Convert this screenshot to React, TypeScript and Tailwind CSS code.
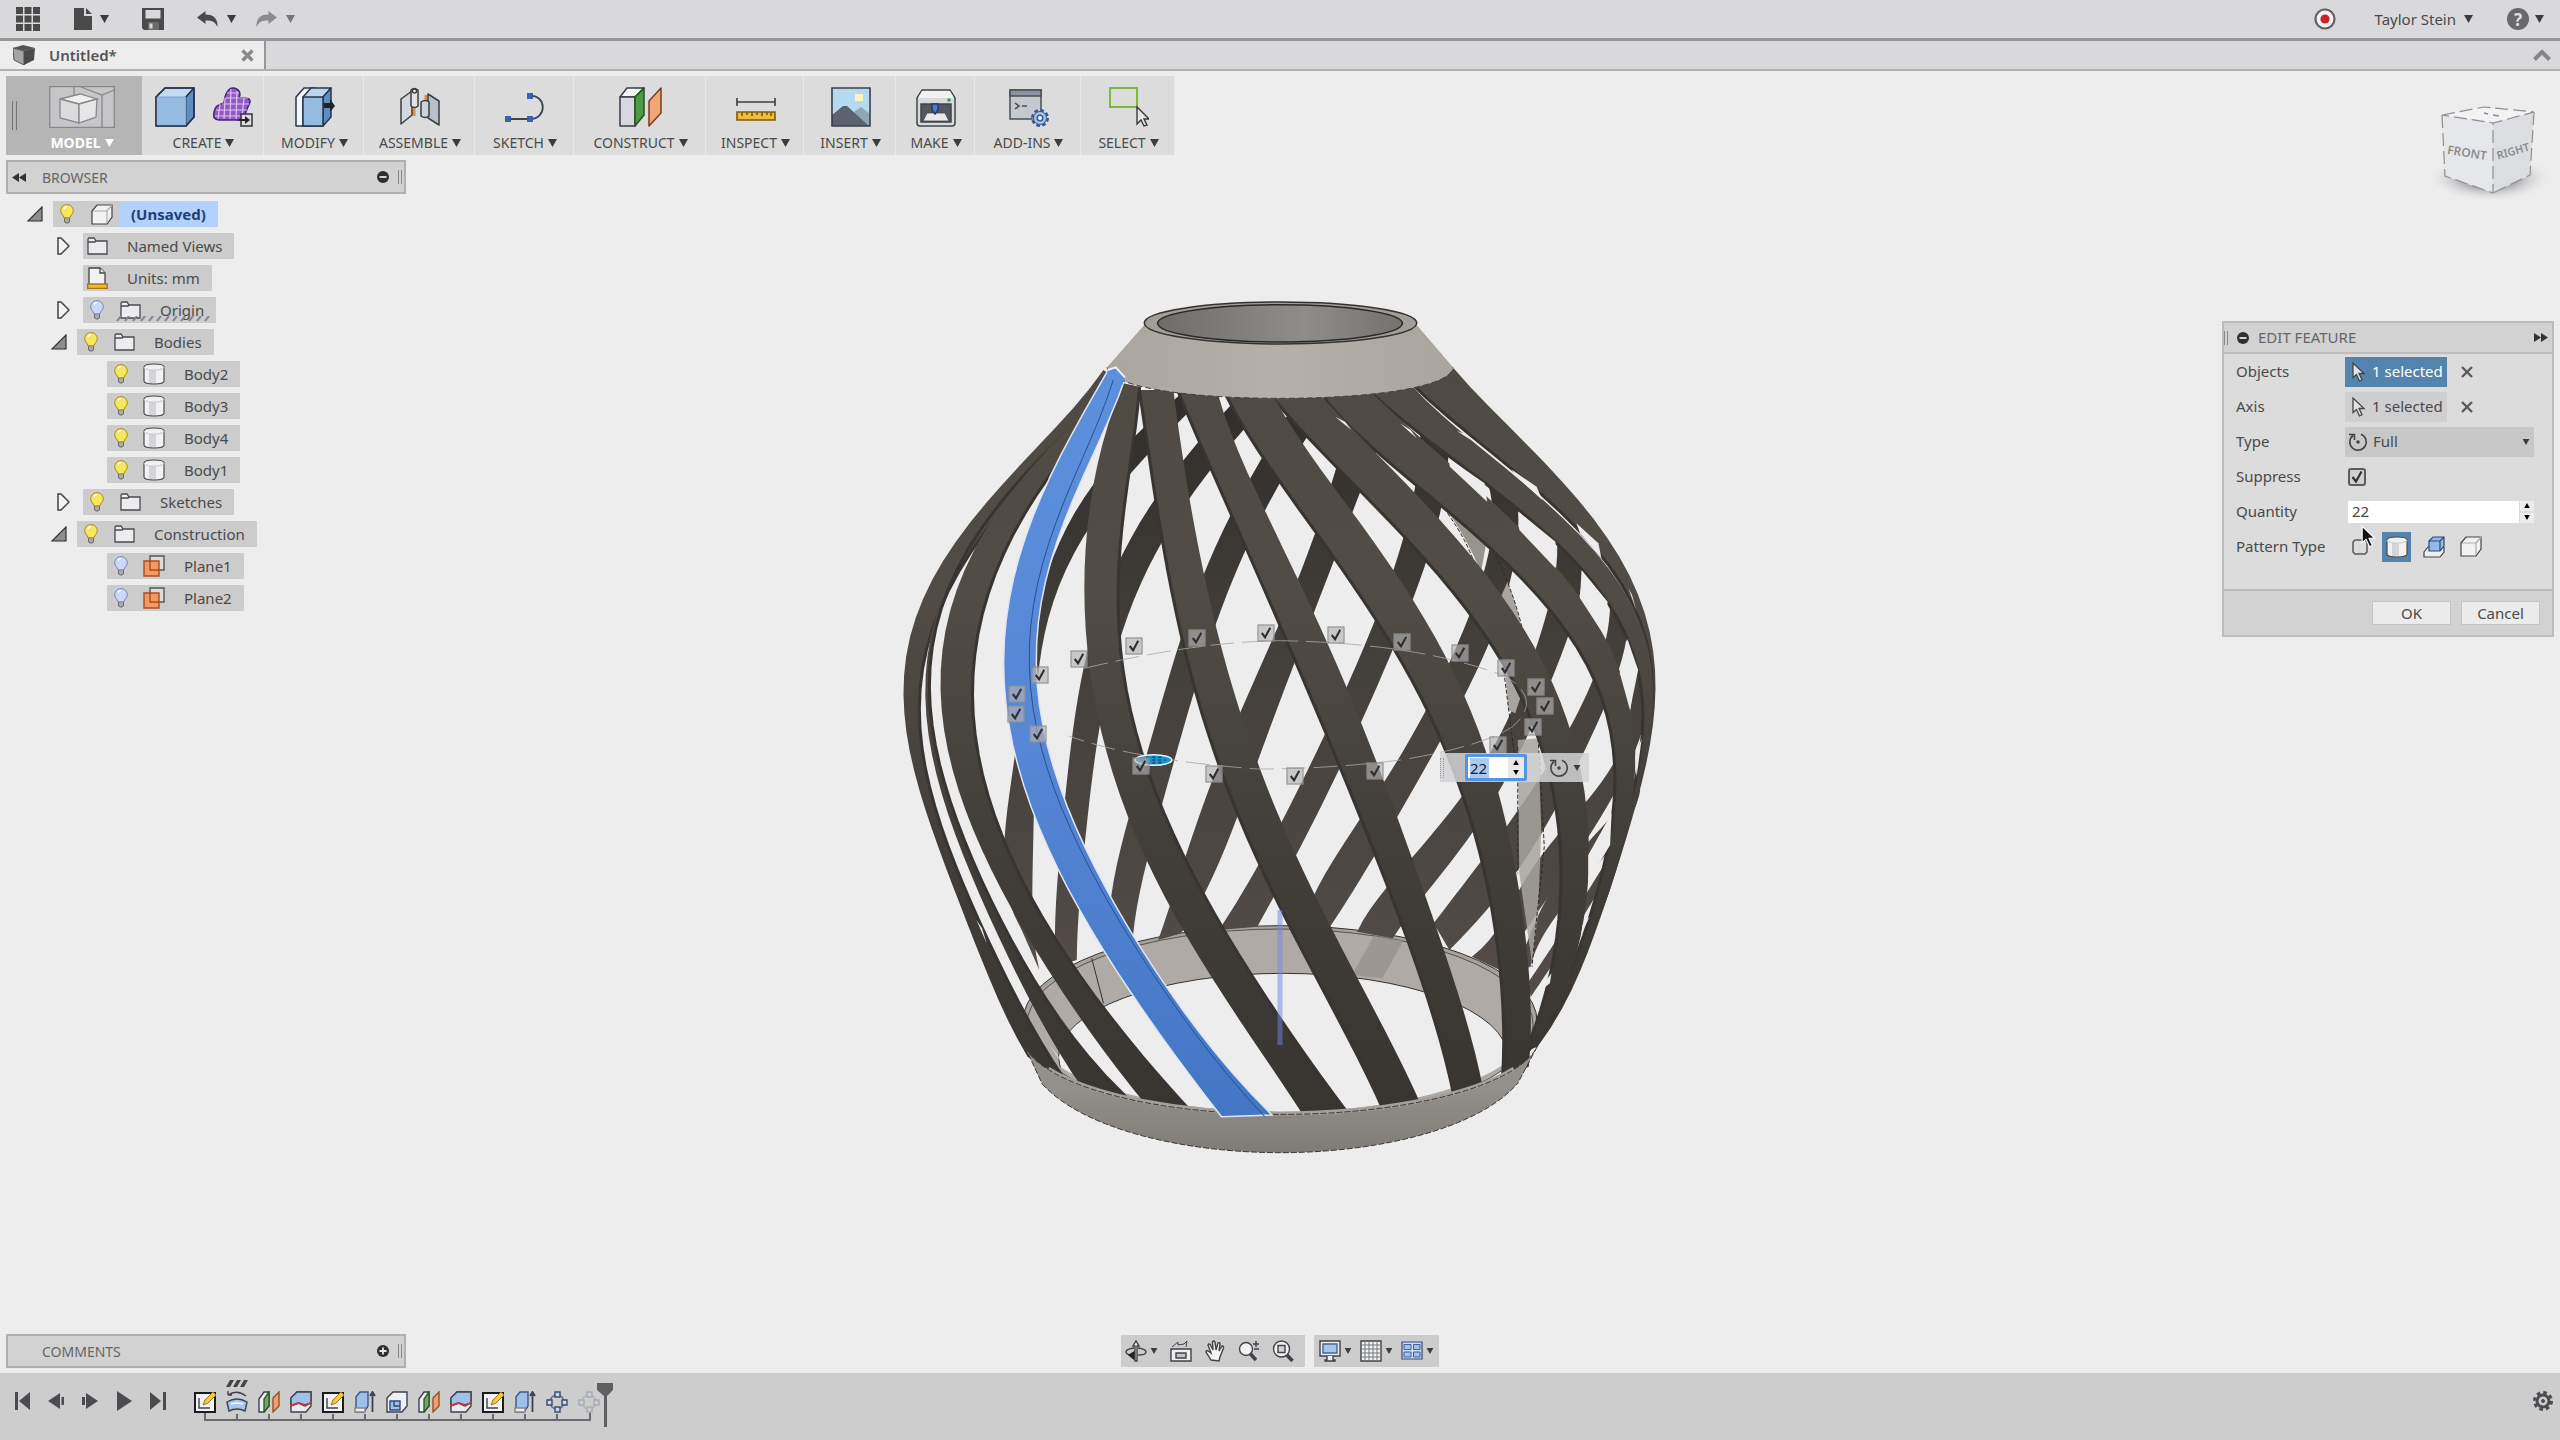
import { useState } from "react"
import type { ReactNode } from "react"
import { twMerge } from "tailwind-merge"

type Point = [number, number]

const parse = (s: string): Point[] => s.split(" ").map((p) => p.split(",").map(Number) as Point)

// Least squares fit of x as a polynomial of y, sampled evenly from top to bottom
function smooth(s: string, samples = 36): Point[] {
  const pts = parse(s)
  const top = pts[0][1]
  const bottom = pts[pts.length - 1][1]
  const n = Math.min(6, pts.length - 1)
  const norm = (y: number) => (2 * (y - top)) / (bottom - top) - 1

  const m = Array.from({ length: n }, () => new Array(n + 1).fill(0))
  for (const [x, y] of pts) {
    const t = norm(y)
    for (let i = 0; i < n; i++) {
      for (let j = 0; j < n; j++) m[i][j] += t ** (i + j)
      m[i][n] += x * t ** i
    }
  }
  for (let i = 0; i < n; i++) {
    for (let r = 0; r < n; r++) {
      if (r === i) continue
      const f = m[r][i] / m[i][i]
      for (let c = i; c <= n; c++) m[r][c] -= f * m[i][c]
    }
  }
  const coef = m.map((row, i) => row[n] / row[i])

  return Array.from({ length: samples + 1 }, (_, k) => {
    const y = top + ((bottom - top) * k) / samples
    const t = norm(y)
    return [coef.reduce((sum, c, i) => sum + c * t ** i, 0), y] as Point
  })
}

const join = (pts: Point[]) => pts.map(([x, y]) => `${x.toFixed(1)},${y.toFixed(1)}`).join("L")
const line = (s: string) => `M${join(smooth(s))}`
const band = (left: string, right: string) => `M${join(smooth(left))}L${join(smooth(right).reverse())}Z`

// Left and right edge of every rib, back of the vase first
const backRibs = [
  ["590,340 520,430 495,490 440,590 380,680 350,760 330,860 315,980 300,1130 285,1250 265,1350 250,1500 247,1700 255,1850 275,1950", "640,340 600,400 560,470 520,550 490,590 430,670 390,780 355,900 330,1020 322,1120 310,1250 297,1500 297,1660 305,1900 310,2070"],
  ["700,350 640,470 600,530 540,650 510,710 475,830 440,950 415,1080 398,1180 385,1300 370,1380 362,1560 352,1770 342,1940 345,2060", "770,350 715,450 650,570 600,650 560,780 520,890 490,980 460,1120 435,1320 400,1690 390,1920 385,2040"],
  ["820,350 755,520 725,595 685,710 635,880 600,1030 575,1150 542,1320 520,1430 487,1620 465,1750 452,1860 450,1980", "880,360 835,480 785,610 750,700 715,810 690,900 660,1020 630,1200 600,1320 575,1420 552,1570 525,1750 495,1970"],
  ["930,380 895,570 875,650 855,750 820,890 785,1030 745,1150 705,1320 655,1470 600,1730 545,1980", "1000,420 975,510 940,640 895,820 870,920 850,1000 810,1160 770,1320 700,1610 640,1830 590,1960"],
  ["1060,450 1050,600 1040,670 1030,770 1005,880 965,1040 912,1220 870,1370 800,1600 740,1750 665,1950", "1115,500 1105,640 1090,730 1070,860 1045,970 1000,1120 960,1250 905,1470 815,1720 740,1940"],
  ["1190,600 1195,760 1190,880 1155,990 1115,1150 1060,1320 970,1550 850,1845 830,1930", "1250,650 1250,770 1240,860 1225,970 1190,1100 1160,1200 1100,1380 1010,1620 880,1945"],
  ["1325,760 1325,880 1310,980 1285,1100 1250,1250 1200,1420 1140,1540 1040,1740 935,1955", "1370,800 1375,900 1365,1000 1345,1080 1320,1180 1290,1300 1210,1540 1165,1650 1070,1840 1005,1975"],
  ["1430,940 1425,1060 1400,1190 1360,1320 1260,1570 1170,1760 1085,1930", "1460,960 1455,1130 1440,1220 1400,1330 1330,1590 1250,1750 1200,1880 1115,2010"],
  ["1485,1170 1475,1250 1430,1460 1385,1580 1330,1650 1250,1840 1160,2030", "1510,1150 1505,1300 1450,1500 1400,1650 1300,1870 1215,2070"],
  ["1480,1520 1440,1600 1385,1690 1330,1800 1275,1960 1240,2080", "1490,1530 1440,1690 1380,1800 1335,1890 1275,2060"],
  ["1440,1700 1380,1860 1335,1950 1270,2110", "1430,1780 1380,1900 1330,2030 1275,2150"],
]

const rightRibs = [
  ["1040,300 1150,470 1240,575 1300,650 1370,735 1410,800 1440,880 1470,950 1490,1040 1500,1150 1503,1320 1500,1450 1475,1560 1440,1760 1400,1900 1340,2130 1275,2310", "1125,265 1200,390 1300,550 1380,670 1430,790 1480,920 1510,1060 1520,1200 1515,1320 1505,1420 1490,1520 1470,1640 1440,1800 1400,1960 1370,2080 1330,2200 1290,2300"],
  ["955,325 1080,490 1180,600 1260,700 1325,790 1380,880 1430,960 1460,1050 1480,1170 1490,1320 1492,1420 1480,1530 1440,1740 1395,1920 1340,2110", "1040,310 1130,450 1240,578 1300,665 1370,755 1420,850 1460,930 1480,1000 1500,1100 1510,1320 1505,1420 1490,1520 1455,1700 1410,1900 1345,2130"],
  ["865,340 960,500 1040,600 1110,700 1180,770 1230,850 1290,950 1330,1020 1365,1100 1395,1190 1415,1260 1425,1320 1438,1450 1440,1590 1430,1720 1400,1850 1375,1970 1355,2070 1325,2170", "960,325 1030,450 1110,540 1190,640 1250,740 1305,820 1350,910 1395,1000 1420,1080 1450,1190 1475,1320 1480,1450 1470,1640 1445,1770 1420,1880 1390,1970 1330,2190"],
  ["765,340 820,450 895,560 950,640 1020,760 1070,850 1130,950 1165,1010 1200,1080 1235,1200 1275,1320 1300,1450 1325,1580 1335,1720 1337,1870 1325,2020 1300,2150 1280,2220 1275,2300", "865,340 930,470 975,530 1035,610 1090,700 1140,780 1190,890 1225,970 1260,1050 1290,1120 1320,1220 1345,1320 1375,1470 1388,1600 1388,1720 1385,1880 1370,2000 1345,2110 1315,2210 1290,2295"],
  ["675,340 720,460 780,580 820,690 860,780 915,900 975,1015 1010,1100 1050,1220 1080,1320 1100,1380 1140,1540 1170,1700 1200,1880 1215,2040 1220,2190 1220,2400", "770,345 830,490 890,630 930,710 980,810 1025,900 1060,1000 1100,1110 1130,1200 1165,1320 1195,1450 1220,1590 1245,1750 1262,1920 1272,2120 1272,2360"],
  ["580,330 620,450 650,560 690,710 730,870 770,1000 810,1120 840,1220 865,1320 905,1470 945,1630 1000,1850 1040,2020 1080,2170 1100,2280 1125,2460", "660,340 700,490 725,590 755,700 790,820 830,930 860,1030 895,1150 915,1220 942,1320 970,1430 1010,1610 1040,1720 1070,1850 1095,1970 1125,2100 1150,2220 1182,2430"],
  ["508,330 525,500 540,650 560,830 590,1080 615,1240 637,1320 665,1440 705,1610 745,1750 790,1910 845,2070 880,2170 940,2320 990,2510", "575,330 590,500 607,650 630,850 655,1020 680,1170 712,1320 730,1400 770,1570 815,1720 850,1840 905,2000 950,2150 1000,2270 1064,2490"],
]

const leftRibs = [
  ["440,270 400,345 340,440 250,600 200,690 150,790 100,900 70,1000 55,1080 47,1200 50,1320 56,1400 75,1500 100,1640 150,1860 180,1960 220,2110 255,2240 290,2330", "450,290 420,380 350,500 270,620 220,720 150,880 110,1020 80,1200 80,1320 90,1460 120,1620 160,1810 200,1970 240,2090 275,2160 330,2290 355,2400"],
  ["440,290 390,380 310,520 250,630 205,710 165,810 130,910 105,1020 92,1200 95,1320 110,1480 160,1700 195,1850 235,2000 280,2130 330,2240 360,2330 400,2440", "440,340 385,440 320,545 250,640 205,720 165,810 130,910 112,1020 106,1200 110,1320 124,1500 167,1700 195,1790 220,1880 262,2010 313,2120 366,2240 392,2290 438,2380 477,2450"],
  ["440,330 390,430 330,520 250,640 200,760 160,860 135,1000 125,1120 130,1320 145,1450 170,1620 209,1750 250,1870 290,1970 320,2050 392,2220 438,2300 477,2380 525,2490", "470,340 420,430 350,530 325,600 300,690 250,800 215,900 196,1000 190,1120 190,1320 195,1470 215,1600 250,1700 290,1820 335,1940 365,2040 400,2110 440,2180 480,2280 530,2360 575,2420 615,2510"],
  ["475,310 460,380 430,540 415,650 402,850 398,1000 405,1140 425,1300 460,1450 487,1610 520,1740 565,1875 625,2040 680,2170 735,2280 775,2370 835,2525", "508,320 495,520 480,690 465,860 465,1000 475,1150 497,1320 515,1430 555,1580 600,1740 640,1870 725,2080 785,2220 850,2350 920,2510"],
]

const blueRib = [
  "445,275 415,350 375,480 330,600 290,740 260,900 245,1050 243,1200 250,1320 262,1400 290,1530 325,1690 365,1820 410,1950 440,2020 490,2130 550,2260 610,2390 668,2510",
  "480,290 465,370 430,480 395,600 365,700 340,830 318,950 308,1070 307,1200 318,1330 345,1490 380,1620 405,1710 440,1820 490,1950 540,2080 600,2200 660,2320 720,2430 768,2505",
]
const blueCrease = "458,300 440,380 405,490 360,680 320,850 297,1000 293,1180 305,1320 330,1480 370,1640 430,1820 500,1990 560,2140 640,2310 755,2510"

// Daylight between the tightly packed outer ribs
const gaps = [
  "892,410 912,426 924,450",
  "1019,430 1040,450 1052,475",
  "1130,452 1146,462 1158,480",
  "1114,535 1185,610 1190,665 1117,560",
  "1237,568 1287,620 1298,660 1248,590",
  "1251,695 1324,785 1324,865 1253,750",
  "1365,730 1408,790 1414,835 1372,760",
  "1375,870 1426,965 1421,1070 1372,955",
  "1467,925 1474,945 1482,990",
  "1465,1077 1486,1170 1470,1290 1450,1180",
  "1493,1375 1483,1490 1480,1430",
  "1434,1600 1431,1695 1388,1805 1388,1725",
  "1391,1910 1375,1960 1377,1935",
  "1316,2080 1313,2110 1284,2145",
  "350,540 345,570 330,595",
  "189,1920 200,1945 209,1990",
  "330,2290 352,2335 377,2395",
]

const instanceTicks = [
  [390, 1137], [497, 1098], [621, 1073], [757, 1058], [894, 1066], [1023, 1087], [1137, 1120], [1227, 1165],
  [1285, 1220], [1303, 1279], [314, 1186], [269, 1241], [267, 1303], [309, 1362], [511, 1458], [655, 1483],
  [814, 1487], [970, 1473], [1212, 1395], [1280, 1342],
]

function Caret({ className }: { className?: string }) {
  return (
    <svg className={twMerge("h-2 w-[9px] shrink-0 text-[#3c3c3c]", className)} viewBox="0 0 9 8" fill="currentColor" aria-hidden>
      <path d="M0 0h9L4.500 8z" />
    </svg>
  )
}

function Tick() {
  return (
    <svg className="pointer-events-none absolute inset-0 h-full w-full" viewBox="0 0 18 18" fill="none" stroke="#303030" strokeWidth="2.200" aria-hidden>
      <path d="M4.500 9l3.500 4.500L13.500 3.500" />
    </svg>
  )
}

function Vase() {
  return (
    <svg className="h-full w-full" viewBox="0 0 1568 2670" preserveAspectRatio="none" role="img" aria-label="Vase model">
      <defs>
        <linearGradient id="front" x1="0" y1="270" x2="0" y2="2500" gradientUnits="userSpaceOnUse">
          <stop offset="0" stopColor="#504a44" />
          <stop offset="0.3" stopColor="#514c45" />
          <stop offset="0.6" stopColor="#433f3b" />
          <stop offset="1" stopColor="#383430" />
        </linearGradient>
        <linearGradient id="back" x1="0" y1="340" x2="0" y2="2050" gradientUnits="userSpaceOnUse">
          <stop offset="0" stopColor="#302d2a" />
          <stop offset="0.45" stopColor="#433f3b" />
          <stop offset="1" stopColor="#524b47" />
        </linearGradient>
        <linearGradient id="blue" x1="0" y1="270" x2="0" y2="2500" gradientUnits="userSpaceOnUse">
          <stop offset="0" stopColor="#5c8fdc" />
          <stop offset="0.5" stopColor="#5587d6" />
          <stop offset="1" stopColor="#4376c4" />
        </linearGradient>
        <linearGradient id="mouth" x1="0" x2="1">
          <stop offset="0" stopColor="#6f6d6b" />
          <stop offset="0.6" stopColor="#8f8d8b" />
          <stop offset="1" stopColor="#747270" />
        </linearGradient>
        <linearGradient id="neck" x1="0" x2="1">
          <stop offset="0" stopColor="#aaa59e" />
          <stop offset="0.5" stopColor="#b5b0a9" />
          <stop offset="1" stopColor="#a9a49e" />
        </linearGradient>
        <linearGradient id="wall" x1="0" x2="0" y1="0" y2="1">
          <stop offset="0.4" stopColor="#93908b" />
          <stop offset="1" stopColor="#7f7c77" />
        </linearGradient>
        <clipPath id="rim">
          <ellipse cx="784" cy="2222" rx="500" ry="274" />
        </clipPath>
      </defs>

      {/* base ring, seen from the inside */}
      <ellipse cx="784" cy="2224" rx="504" ry="287" fill="#a5a19c" stroke="#35322f" vectorEffect="non-scaling-stroke" />
      <ellipse cx="784" cy="2234" rx="496" ry="287" fill="#b0aaa6" stroke="#55514d" vectorEffect="non-scaling-stroke" />
      <g clipPath="url(#rim)">
        <path d="M975 1950L925 2085L985 2095L1030 1970Z" fill="#968f89" opacity="0.7" />
        <ellipse cx="790" cy="2330" rx="440" ry="250" fill="#ededee" stroke="#35322f" vectorEffect="non-scaling-stroke" />
      </g>
      <path d="M415 2035L438 2170" fill="none" stroke="#35322f" vectorEffect="non-scaling-stroke" />

      {backRibs.map(([l, r]) => (
        <path key={l} d={band(l, r)} fill="url(#back)" />
      ))}

      {/* sliver of the profile surface */}
      <g fill="#a8a49f">
        <path d="M1090 650L1190 775L1178 875Q1140 740 1090 650Z" fill="#97948e" />
        <path d="M1230 905L1246 975L1258 1045L1217 950Z" />
        <path d="M1225 1170L1258 1240L1245 1300L1232 1290Z" />
        <path d="M1250 1380L1290 1375L1296 1650L1290 1900L1278 2050L1253 1780Z" opacity="0.850" />
      </g>
      <path
        d="M1075 630Q1140 740 1165 850M1190 780Q1235 900 1258 1040M1220 1140L1243 1420M1250 1400V1780M1290 1375L1302 1700L1288 1900L1278 2060"
        fill="none"
        stroke="#2b2927"
        strokeDasharray="4 2"
        vectorEffect="non-scaling-stroke"
      />

      {rightRibs.map(([l, r]) => (
        <g key={l}>
          <path d={band(l, r)} fill="url(#front)" />
          <path d={line(l)} fill="none" stroke="#383431" strokeWidth="3" vectorEffect="non-scaling-stroke" />
        </g>
      ))}
      {leftRibs.map(([l, r]) => (
        <g key={l}>
          <path d={band(l, r)} fill="url(#front)" />
          <path d={line(r)} fill="none" stroke="#383431" strokeWidth="3" vectorEffect="non-scaling-stroke" />
        </g>
      ))}
      {gaps.map((points) => (
        <polygon key={points} points={points} fill="#ededee" />
      ))}

      {/* rotation axis */}
      <rect x="779" y="1890" width="10" height="405" fill="#6f86e8" opacity="0.5" />

      <path d="M284 2300L318 2412C400 2550 600 2618 785 2618C970 2618 1170 2550 1250 2410L1288 2300A508 240 0 0 1 284 2300Z" fill="url(#wall)" />
      <path d="M330 2366A508 240 0 0 0 1242 2366" fill="none" stroke="#a39f9a" strokeWidth="4" vectorEffect="non-scaling-stroke" />
      <path d="M284 2300A508 240 0 0 0 1288 2300M318 2412C400 2550 600 2618 785 2618C970 2618 1170 2550 1250 2410M284 2300L318 2412M1288 2300L1250 2410" fill="none" stroke="#3b3835" strokeDasharray="6 2" vectorEffect="non-scaling-stroke" />

      <path d={band(blueRib[0], blueRib[1])} fill="url(#blue)" stroke="#dfe6f2" strokeWidth="1.500" vectorEffect="non-scaling-stroke" />
      <path d={line(blueCrease)} fill="none" stroke="#2b4f8f" vectorEffect="non-scaling-stroke" />

      {/* neck */}
      <path d="M518 135L445 262C450 320 600 355 784 355C970 355 1120 320 1123 262L1052 135Z" fill="url(#neck)" />
      <path d="M445 262C450 320 600 355 784 355C970 355 1120 320 1123 262" fill="none" stroke="#45413d" strokeDasharray="6 3" vectorEffect="non-scaling-stroke" />
      <ellipse cx="785" cy="129" rx="267" ry="63" fill="#a19d98" stroke="#35322f" strokeWidth="1.500" vectorEffect="non-scaling-stroke" />
      <ellipse cx="784" cy="130" rx="240" ry="56" fill="url(#mouth)" stroke="#2b2927" strokeWidth="1.500" vectorEffect="non-scaling-stroke" />
      <path d="M445 275L462 262L480 290L475 315L446 290Z" fill="#5c8fdc" />
      <path d="M446 270L462 262L480 292" fill="none" stroke="#edf2fb" strokeWidth="2" vectorEffect="non-scaling-stroke" />

      {/* pattern circle */}
      <path d="M400 1165Q620 1085 785 1082Q1060 1090 1227 1190Q1300 1260 1240 1340Q1180 1400 1020 1440Q880 1467 740 1467Q500 1440 370 1368" fill="none" stroke="#a9a9a8" strokeDasharray="24 8" opacity="0.8" vectorEffect="non-scaling-stroke" />
      <ellipse cx="536" cy="1440" rx="36" ry="16" fill="#1593cf" stroke="#e8f4fb" strokeWidth="1.500" vectorEffect="non-scaling-stroke" />
      <path d="M510 1440h50M522 1432h30M522 1448h30" stroke="#0b4c73" strokeWidth="1.500" strokeDasharray="3 3" vectorEffect="non-scaling-stroke" />
    </svg>
  )
}

function FullTypeIcon() {
  return (
    <svg className="h-5 w-5 shrink-0" viewBox="0 0 20 20" fill="none" stroke="#444" strokeWidth="1.600" aria-hidden>
      <path d="M5 3.500A8.200 8.200 0 1 0 13 2.300M1 2.500h5.500V8" />
      <circle cx="10" cy="10" r="1" fill="#444" />
    </svg>
  )
}

function Canvas() {
  return (
    <div className="absolute inset-0 flex justify-center pt-[209px]">
      <div className="relative h-[890px] w-[800px] shrink-0">
        <Vase />
        {instanceTicks.map(([x, y], i) => (
          <label
            key={i}
            className="absolute h-[17px] w-[17px] -translate-1/2"
            style={{ left: `${(x / 1568) * 100}%`, top: `${(y / 2670) * 100}%` }}
          >
            <input
              type="checkbox"
              defaultChecked
              aria-label={`Instance ${i + 1}`}
              className="block h-[17px] w-[17px] appearance-none border border-[#808080]/80 bg-[#b4b4b6]/65"
            />
            <Tick />
          </label>
        ))}
        <div className="absolute top-[473px] left-[560px] flex h-[29px] w-[149px] items-center bg-[#d4d4d6]/85">
          <span className="h-5 w-1 border-x border-dotted border-[#999]" />
          <span className="ml-[21px] flex h-[27px] w-[62px] items-center rounded-xs border-3 border-[#5494e3] bg-white pl-[2px]">
            <input aria-label="Quantity" defaultValue="22" className="w-[19px] bg-[#a9cbf3] text-[15px] leading-5 text-[#222] outline-none" />
            <span className="ml-auto flex h-full w-4 flex-col items-center justify-around bg-[#e8e8e8]">
              <Caret className="h-[5px] w-[6px] rotate-180 text-black" />
              <Caret className="h-[5px] w-[6px] text-black" />
            </span>
          </span>
          <button className="ml-[22px] flex items-center gap-1" aria-label="Pattern extent">
            <FullTypeIcon />
            <Caret className="h-[6px] w-[8px]" />
          </button>
        </div>
      </div>
    </div>
  )
}

function TopBar() {
  return (
    <header className="flex h-[41px] items-center border-b-3 border-[#969698] bg-[#d9d9db] pr-4 pl-4 text-[#4a4a4a]">
      <button aria-label="Data panel">
        <svg className="h-6 w-6" viewBox="0 0 24 24" fill="currentColor">
          <path d="M0 0h7v7H0zM8.500 0h7v7h-7zM17 0h7v7h-7zM0 8.500h7v7H0zM8.500 8.500h7v7h-7zM17 8.500h7v7h-7zM0 17h7v7H0zM8.500 17h7v7h-7zM17 17h7v7h-7z" />
        </svg>
      </button>
      <button className="ml-[34px] flex items-center gap-2" aria-label="File">
        <svg className="h-[22px] w-[18px]" viewBox="0 0 18 22" fill="currentColor">
          <path d="M0 0h10v8h8v14H0z" />
          <path d="M12 0l6 6h-6z" />
        </svg>
        <Caret />
      </button>
      <button className="ml-[33px]" aria-label="Save">
        <svg className="h-[22px] w-[22px]" viewBox="0 0 22 22" fill="currentColor">
          <path fillRule="evenodd" d="M0 0h22v22H2L0 20zM3.500 2v8.500h15V2zM6 14v8h11v-8z" />
          <path d="M6 14h11v8H6z" fill="#6b6b6d" />
          <path d="M7.500 15.500h3v5h-3z" fill="#d9d9db" />
        </svg>
      </button>
      <button className="ml-[33px] flex items-center gap-[9px]" aria-label="Undo">
        <svg className="h-4 w-[21px]" viewBox="0 0 21 16" fill="currentColor">
          <path d="M0 6.500L8.500 0v3.500C17 3.500 21 8 20.500 16 18 10.500 15 9.500 8.500 9.500V13z" />
        </svg>
        <Caret />
      </button>
      <button className="ml-5 flex items-center gap-[9px] text-[#8b8b8d]" aria-label="Redo">
        <svg className="h-4 w-[21px]" viewBox="0 0 21 16" fill="currentColor">
          <path d="M21 6.500L12.500 0v3.500C4 3.500 0 8 .5 16 3 10.500 6 9.500 12.500 9.500V13z" />
        </svg>
        <Caret className="text-[#77777a]" />
      </button>

      <button className="ml-auto" aria-label="Record">
        <svg className="h-[22px] w-[22px]" viewBox="0 0 22 22">
          <circle cx="11" cy="11" r="9.500" fill="#f3f3f3" stroke="#626264" strokeWidth="2.200" />
          <circle cx="11" cy="11" r="4.600" fill="#d11f26" />
        </svg>
      </button>
      <button className="ml-[39px] flex items-center gap-2 text-[15px]">
        Taylor Stein
        <Caret />
      </button>
      <button className="ml-[34px] flex items-center gap-[6px]" aria-label="Help">
        <span className="flex h-[22px] w-[22px] items-center justify-center rounded-full bg-[#69696b] text-[17px] leading-none font-bold text-[#dedee0]">?</span>
        <Caret />
      </button>
    </header>
  )
}

function TabBar() {
  return (
    <div className="flex h-[30px] items-stretch justify-between border-b-2 border-[#b0b0b2] bg-[#d9d9db]">
      <div className="flex w-[266px] items-center border-r-2 border-[#97979a] bg-[#ededee] pr-[10px] pl-[13px] text-[15px] font-semibold text-[#555]">
        <svg className="h-5 w-[22px]" viewBox="0 0 22 20" aria-hidden>
          <path d="M0 3l10-3 12 3-10 3z" fill="#555" />
          <path d="M0 3l11 3v14L1 15z" fill="#a5a5a5" stroke="#555" />
          <path d="M11 6l11-3-1 12-10 5z" fill="#4a4a4a" />
        </svg>
        <span className="ml-[14px]">Untitled*</span>
        <button className="ml-auto" aria-label="Close tab">
          <svg className="h-[13px] w-[13px]" viewBox="0 0 13 13" stroke="#8a8a8a" strokeWidth="3.400">
            <path d="M1.500 1.500l10 10M11.500 1.500l-10 10" />
          </svg>
        </button>
      </div>
      <button className="mr-[9px]" aria-label="Collapse toolbar">
        <svg className="h-3 w-[18px]" viewBox="0 0 18 12" fill="none" stroke="#858587" strokeWidth="4">
          <path d="M1.500 10.500L9 3l7.500 7.500" />
        </svg>
      </button>
    </div>
  )
}

const box = { fill: "#dfe8f5", stroke: "#27364d", strokeWidth: 1.5, strokeLinejoin: "round" as const }

function BigBox() {
  return (
    <svg className="h-10 w-10" viewBox="0 0 40 40" {...box}>
      <path d="M1 10L10 1h29l-8 9v29H1z" fill="#c3daf2" />
      <path d="M31 10l8-9v29l-8 9z" fill="#5f8dc2" />
      <path d="M1 10h30v29H1z" fill="#96bbe3" stroke="#6f97c8" strokeWidth="0.800" />
      <path d="M1 10L10 1h29v29l-8 9H1z" fill="none" />
    </svg>
  )
}

function FormIcon() {
  return (
    <svg className="h-10 w-10" viewBox="0 0 40 40" aria-hidden>
      <path d="M12 10Q15 0 21 1t6 7l-1 3q12-1 11 4l-5 12q-3 7-9 6H6q-7-1-5-7 1-7 5-8l5-2z" fill="#9159c4" stroke="#4b2475" strokeWidth="1.500" />
      <path d="M14 6h12M12 11h23M9 17h27M3 23h31M2 29h28M7 17L5 32M12 11l-1 21M18 2l-1 30M24 4l-1 28M31 11l-2 18" stroke="#dcc3f2" strokeWidth="1.200" fill="none" />
      <path d="M28 27h11v12H28z" fill="#ddd" stroke="#333" strokeWidth="1.500" />
      <path d="M26 33h7" stroke="#222" strokeWidth="2" />
      <path d="M32 29l5 4-5 4z" fill="#222" />
    </svg>
  )
}

function ToolIcon({ name }: { name: string }) {
  switch (name) {
    case "MODEL":
      return (
        <svg className="h-[42px] w-[66px]" viewBox="0 0 66 42" fill="#c6c6c8" stroke="#88888a" strokeWidth="1.300">
          <path d="M.7.700h64.600v40.600H.7z" />
          <path d="M25 1v12M32 1l21 8 12-5M53 9v32" fill="none" />
          <path d="M11 13l20-5 17 5-18 5z" fill="#efeff0" />
          <path d="M11 13l19 5v19l-19-5z" fill="#dcdcde" />
          <path d="M30 18l18-5-1 18-17 6z" fill="#e6e6e8" />
        </svg>
      )
    case "CREATE":
      return (
        <>
          <BigBox />
          <span className="w-[18px]" />
          <FormIcon />
        </>
      )
    case "MODIFY":
      return (
        <svg className="h-10 w-10" viewBox="0 0 40 40" {...box}>
          <path d="M1 10l8-9h11l-8 9v29H1z" fill="#f4f5f7" />
          <path d="M8 10l8-9h20l-8 9v29H8z" fill="#bdd5ef" />
          <path d="M28 10l8-9v29l-8 9z" fill="#5f8dc2" />
          <path d="M8 10h20v29H8z" fill="#96bbe3" />
          <path d="M29 16h6v-4l5 7-5 6v-4h-6z" fill="#222" stroke="none" />
        </svg>
      )
    case "ASSEMBLE":
      return (
        <svg className="h-10 w-10" viewBox="0 0 40 40" {...box} stroke="#3a3d44">
          <path d="M14 15v14M26 8v14" stroke="#e58a45" strokeWidth="3" />
          <path d="M1 12L12 4v24L1 37z" fill="#d3d7de" />
          <path d="M39 14L28 7v24l11 7z" fill="#b9bec8" />
          <path d="M11 3q3-3 7 0v16q-3 3-7 0z" fill="#e2e4e8" />
          <path d="M21 15q4-3 8 0v14q-4 3-8 0z" fill="#cfd3da" />
          <circle cx="14.500" cy="4" r="2" fill="#fff" />
        </svg>
      )
    case "SKETCH":
      return (
        <svg className="h-10 w-10" viewBox="0 0 40 40" fill="none" stroke="#3f444c" strokeWidth="1.800">
          <path d="M3 32h22M25 9c17-1 17 23 0 23" />
          <path d="M0 29h6v6H0zM22 29h6v6h-6zM22 6h6v6h-6z" fill="#3d60b2" stroke="none" />
        </svg>
      )
    case "CONSTRUCT":
      return (
        <svg className="h-10 w-11" viewBox="0 0 44 40" {...box} stroke="#3a3d44">
          <path d="M1 10l7-9h17l-9 9z" fill="#f5f5f7" />
          <path d="M1 10h15v29H1z" fill="#d6d7e0" />
          <path d="M16 10l9-9v27l-9 11z" fill="#4d9a44" stroke="#24521f" />
          <path d="M30 14L42 1v25L30 39z" fill="#f2a677" stroke="#7a3c1b" />
        </svg>
      )
    case "INSPECT":
      return (
        <svg className="h-10 w-10" viewBox="0 0 40 40" fill="none" stroke="#3f3f3f" strokeWidth="1.600">
          <path d="M1 11v8M39 11v8M1 15h38" />
          <path d="M1 25h38v8H1z" fill="#eebd35" stroke="#7c5b10" />
          <path d="M6 25v4M11 25v3M16 25v4M21 25v3M26 25v4M31 25v3M35 25v4" stroke="#7c5b10" />
        </svg>
      )
    case "INSERT":
      return (
        <svg className="h-10 w-10" viewBox="0 0 40 40">
          <path d="M1 1h38v38H1z" fill="#b5d9ee" />
          <path d="M24 7h8v7h-8z" fill="#fbf5bb" />
          <path d="M17 29l13-9 9 7v12H18z" fill="#92a5b5" />
          <path d="M1 28l11-9h4l22 20H1z" fill="#5b6270" />
          <path d="M1 1h38v38H1z" fill="none" stroke="#37404f" strokeWidth="1.600" />
        </svg>
      )
    case "MAKE":
      return (
        <svg className="h-10 w-10" viewBox="0 0 40 40" stroke="#41444b" strokeWidth="1.500">
          <path d="M6 3h28l5 8v25q0 3-3 3H4q-3 0-3-3V11z" fill="#d9dade" />
          <path d="M6 4h28l4 7H2z" fill="#f2f2f4" stroke="none" />
          <path d="M5 17h30v18H5z" fill="#54575e" />
          <path d="M11 26h18l4 8H7z" fill="#e9e9ec" strokeWidth=".8" />
          <path d="M16 17h6v6l-3 4-3-4z" fill="#4c7ac6" stroke="#1f3c78" />
          <circle cx="33" cy="13" r="1.700" fill="#2a9c32" stroke="none" />
        </svg>
      )
    case "ADD-INS":
      return (
        <svg className="h-10 w-10" viewBox="0 0 40 40" stroke="#494d56" strokeWidth="1.500">
          <path d="M1 3h31v29H1z" fill="#c6c8cf" />
          <path d="M1 3h31v6H1z" fill="#8d919b" />
          <path d="M6 16l4 3-4 3M13 19h5" fill="none" />
          <circle cx="31" cy="31" r="7.500" fill="#a4c1ea" stroke="#36598f" strokeWidth="3" strokeDasharray="3.500 2.400" />
          <circle cx="31" cy="31" r="6.500" fill="#a4c1ea" stroke="#36598f" strokeWidth="1" />
          <circle cx="31" cy="31" r="2.800" fill="#f1f5fb" stroke="#36598f" />
        </svg>
      )
    default:
      return (
        <svg className="h-10 w-10" viewBox="0 0 40 40">
          <path d="M1 1h27v19H1z" fill="none" stroke="#7fb93a" strokeWidth="2" />
          <path d="M28 20v17l4-4 3 6 3-1-3-6h5z" fill="#e5e5e8" stroke="#3a3a3d" strokeWidth="1.400" />
        </svg>
      )
  }
}

const tools = [
  { name: "MODEL", width: "w-[136px]" },
  { name: "CREATE", width: "w-[122px]" },
  { name: "MODIFY", width: "w-[100px]" },
  { name: "ASSEMBLE", width: "w-[111px]" },
  { name: "SKETCH", width: "w-[99px]" },
  { name: "CONSTRUCT", width: "w-[132px]" },
  { name: "INSPECT", width: "w-[98px]" },
  { name: "INSERT", width: "w-[92px]" },
  { name: "MAKE", width: "w-[79px]" },
  { name: "ADD-INS", width: "w-[106px]" },
  { name: "SELECT", width: "w-[94px]" },
]

function Toolbar() {
  return (
    <nav className="flex h-[79px] text-[14px] text-[#4a4a4a]" aria-label="Workspace tools">
      {tools.map(({ name, width }) => {
        const active = name === "MODEL"
        return (
          <button
            key={name}
            className={`relative flex shrink-0 flex-col items-center pt-[7px] ${width} ${
              active ? "bg-[#b5b5b6] pl-4 font-bold text-white" : "border-r border-[#e8e8e9] bg-[#dcdcdc] pl-[2px]"
            }`}
          >
            {active && <span className="absolute top-[25px] left-[6px] h-[29px] w-[5px] border-x border-[#77777a]" />}
            <span className="flex h-[48px] items-center">
              <ToolIcon name={name} />
            </span>
            <span className="flex items-center gap-1 leading-6">
              {name}
              <Caret className={active ? "text-white" : ""} />
            </span>
          </button>
        )
      })}
    </nav>
  )
}

function PanelHead({ title, open }: { title: string; open: boolean }) {
  return (
    <div className="flex h-[34px] w-[400px] items-center border-2 border-[#b0b0b1] bg-[#d2d2d3] pr-[2px] pl-1 text-[14px] text-[#666]">
      <span className="flex w-[30px] items-center">
        {open && (
          <svg className="h-[9px] w-[14px]" viewBox="0 0 14 9" fill="#333" aria-hidden>
            <path d="M7 0v9L0 4.500zM14 0v9L7 4.500z" />
          </svg>
        )}
      </span>
      {title}
      <button className="ml-auto" aria-label={open ? "Collapse" : "Expand"}>
        <svg className="h-3 w-3" viewBox="0 0 12 12">
          <circle cx="6" cy="6" r="6" fill="#2f2f2f" />
          <path d={open ? "M2.500 6h7" : "M2.500 6h7M6 2.500v7"} stroke="#e8e8e8" strokeWidth="1.800" />
        </svg>
      </button>
      <span className="ml-[9px] h-[14px] w-1 border-x border-[#88888a]" />
    </div>
  )
}

function Bulb({ on }: { on: boolean }) {
  return (
    <svg className="h-5 w-[14px]" viewBox="0 0 14 20" aria-hidden>
      <path d="M4.500 13h5v5q-2.500 2.500-5 0z" fill="#aaa" stroke="#555" strokeWidth=".8" />
      <path d="M7 .6a6.200 6.200 0 0 1 6.300 6.200c0 3.200-2.800 4-3.300 7H4C3.500 10.800.7 10 .7 6.800A6.200 6.200 0 0 1 7 .6z" fill={on ? "#f8e75c" : "#cbd8fb"} stroke={on ? "#a38a1f" : "#7387bd"} />
      <path d="M4 5q1-2.500 3-2.500" stroke="#fff" strokeWidth="1.500" fill="none" />
    </svg>
  )
}

function BodyIcon() {
  return (
    <svg className="h-[22px] w-[22px]" viewBox="0 0 22 22" stroke="#4b4b4d" strokeWidth="1.200">
      <path d="M1 4q0-3 10-3t10 3v14q0 3-10 3T1 18z" fill="#f1f1f3" />
      <path d="M6 7h7v13H6z" fill="#d3d3d8" stroke="none" />
      <path d="M1 4q1 3 10 3t10-3" fill="none" stroke="#cfcfd2" />
    </svg>
  )
}

function NodeIcon({ kind }: { kind: string }) {
  if (kind === "folder")
    return (
      <svg className="h-[18px] w-[21px]" viewBox="0 0 21 18" fill="#ececf0" stroke="#4a4a4c" strokeWidth="1.300">
        <path d="M1 17V2l1-1h5l2 3h11v13z" />
        <path d="M1 5h7l1-1" />
      </svg>
    )
  if (kind === "cube")
    return (
      <svg className="h-[21px] w-[22px]" viewBox="0 0 22 21" fill="#f2f2f3" stroke="#444" strokeWidth="1.200">
        <path d="M1 7L6 1h15v12l-5 7H1z" />
        <path d="M2 7h14l5-6M16 7v12" stroke="#aaa" fill="none" />
      </svg>
    )
  if (kind === "units")
    return (
      <svg className="h-[22px] w-[21px]" viewBox="0 0 21 22" fill="#f2f2f3" stroke="#444" strokeWidth="1.300">
        <path d="M2 17V1h11l5 5v11" />
        <path d="M13 1v5h5" />
        <path d="M.7 17h19.600v4.300H.7z" fill="#f0b92f" stroke="#a87513" />
      </svg>
    )
  if (kind === "plane")
    return (
      <svg className="h-[22px] w-[22px]" viewBox="0 0 22 22" strokeWidth="1.400">
        <path d="M7 1h14v14H7z" fill="#dcdcdf" stroke="#55555a" />
        <path d="M1 6h15v15H1z" fill="#f39a63" stroke="#a84f1d" />
        <path d="M7 6v9h9" fill="none" stroke="#a84f1d" />
      </svg>
    )
  return <BodyIcon />
}

const tree = [
  { label: "Named Views", pad: "pl-[51px]", arrow: "closed", kind: "folder" },
  { label: "Units: mm", pad: "pl-[51px]", arrow: "none", kind: "units" },
  { label: "Origin", pad: "pl-[51px]", arrow: "closed", kind: "folder", bulb: false },
  { label: "Bodies", pad: "pl-[45px]", arrow: "open", kind: "folder", bulb: true },
  { label: "Body2", pad: "pl-[75px]", arrow: "none", kind: "body", bulb: true },
  { label: "Body3", pad: "pl-[75px]", arrow: "none", kind: "body", bulb: true },
  { label: "Body4", pad: "pl-[75px]", arrow: "none", kind: "body", bulb: true },
  { label: "Body1", pad: "pl-[75px]", arrow: "none", kind: "body", bulb: true },
  { label: "Sketches", pad: "pl-[51px]", arrow: "closed", kind: "folder", bulb: true },
  { label: "Construction", pad: "pl-[45px]", arrow: "open", kind: "folder", bulb: true },
  { label: "Plane1", pad: "pl-[75px]", arrow: "none", kind: "plane", bulb: false },
  { label: "Plane2", pad: "pl-[75px]", arrow: "none", kind: "plane", bulb: false },
]

function Arrow({ state }: { state: string }) {
  return (
    <span className="flex w-[26px] shrink-0 items-center">
      {state === "open" && (
        <svg className="h-4 w-4" viewBox="0 0 16 16" aria-hidden>
          <path d="M1 15L15 1v14z" fill="#8e8e8e" stroke="#333" strokeWidth="1.200" />
        </svg>
      )}
      {state === "closed" && (
        <svg className="h-[18px] w-[13px]" viewBox="0 0 13 18" aria-hidden>
          <path d="M1 1h3l8 8-8 8H1z" fill="#f4f4f4" stroke="#444" strokeWidth="1.500" />
        </svg>
      )}
    </span>
  )
}

function Browser() {
  return (
    <section className="mt-[5px]">
      <PanelHead title="BROWSER" open />
      <ul className="mt-[7px] flex flex-col gap-[6px] text-[15px] text-[#4a4a4a]">
        <li className="flex h-[26px] items-stretch pl-[21px]">
          <Arrow state="open" />
          <span className="flex items-center bg-[#cccccd]">
            <span className="flex w-7 justify-center"><Bulb on /></span>
            <span className="ml-[6px] flex w-[33px] justify-center pr-[3px]"><NodeIcon kind="cube" /></span>
          </span>
          <span className="flex items-center bg-[#b3d1fb] pr-3 pl-[11px] font-bold text-[#1f3f74]">(Unsaved)</span>
        </li>
        {tree.map(({ label, pad, arrow, kind, bulb }) => (
          <li key={label} className={`flex h-[26px] items-stretch ${pad}`}>
            <Arrow state={arrow} />
            <span className="relative flex items-center bg-[#cccccd] pr-3">
              {bulb !== undefined && (
                <span className="mr-[5px] flex w-7 justify-center"><Bulb on={bulb} /></span>
              )}
              <span className="flex w-7 justify-center"><NodeIcon kind={kind} /></span>
              <span className="pl-4">{label}</span>
              {label === "Origin" && (
                <svg className="absolute right-1 bottom-[2px] h-[5px] w-[96px]" viewBox="0 0 96 5" stroke="#7d8494" strokeWidth="2">
                  <path d="M1 5l4-5M9 5l4-5M17 5l4-5M25 5l4-5M33 5l4-5M41 5l4-5M49 5l4-5M57 5l4-5M65 5l4-5M73 5l4-5M81 5l4-5M89 5l4-5" />
                </svg>
              )}
            </span>
          </li>
        ))}
      </ul>
    </section>
  )
}

function ViewCube() {
  return (
    <svg className="mr-2 h-[120px] w-[128px]" viewBox="0 0 128 120" aria-label="View cube">
      <defs>
        <radialGradient id="shade">
          <stop offset="0.4" stopColor="#77777a" stopOpacity="0.65" />
          <stop offset="1" stopColor="#ededee" stopOpacity="0" />
        </radialGradient>
      </defs>
      <ellipse cx="66" cy="82" rx="62" ry="24" fill="url(#shade)" />
      <path d="M18 19L60 11l50 5-41 11z" fill="#f3f3f4" />
      <path d="M18 19l51 8v70L21 80z" fill="#e6e7ea" />
      <path d="M69 27l41-11-4 63-37 18z" fill="#dcdde1" />
      <g fill="none" stroke="#8f8f92" strokeWidth="1.200" strokeDasharray="13 5">
        <path d="M18 19L60 11l50 5-41 11z" />
        <path d="M18 19l3 61 48 17V27M110 16l-4 63-37 18" />
      </g>
      <path d="M60 17l4 1M69 19l6 1" stroke="#8f8f92" strokeWidth="1.500" />
      <g fontFamily="Noto Sans, sans-serif" fontWeight="600" fill="#8c8c8f" textAnchor="middle">
        <text x="43" y="61" fontSize="12" transform="rotate(9 43 57)">FRONT</text>
        <text x="89" y="59" fontSize="11" transform="rotate(-16 89 55)">RIGHT</text>
      </g>
    </svg>
  )
}

function PointerIcon() {
  return (
    <svg className="h-5 w-[14px]" viewBox="0 0 14 20" fill="#e3e3e6" stroke="#444" strokeWidth="1.300" aria-hidden>
      <path d="M1 1v14.500l3.500-3 3 6.500 2.500-1.200-3-6.300H12z" />
    </svg>
  )
}

function Field({ label, id, children }: { label: string; id?: string; children: ReactNode }) {
  return (
    <div className="flex h-[35px] items-center">
      <label htmlFor={id} className="w-[109px] shrink-0">{label}</label>
      {children}
    </div>
  )
}

function Selection({ id, active }: { id: string; active?: boolean }) {
  return (
    <>
      <button
        id={id}
        className={`flex h-[30px] w-[102px] items-center gap-[6px] pl-[7px] ${active ? "bg-[#5484ad] text-white" : "bg-[#cfcfd1]"}`}
      >
        <PointerIcon />
        1 selected
      </button>
      <button className="ml-[14px]" aria-label="Clear selection">
        <svg className="h-3 w-3" viewBox="0 0 12 12" stroke="#5a5a5a" strokeWidth="2.400">
          <path d="M1 1l10 10M11 1L1 11" />
        </svg>
      </button>
    </>
  )
}

function PatternIcon({ kind }: { kind: string }) {
  if (kind === "Bodies") return <BodyIcon />
  if (kind === "Faces")
    return (
      <svg className="h-4 w-4" viewBox="0 0 16 16" fill="none" stroke="#555" strokeWidth="1.500">
        <path d="M3 1h10l2 2v10l-2 2H3l-2-2V3z" />
      </svg>
    )
  if (kind === "Features")
    return (
      <svg className="h-[22px] w-[22px]" viewBox="0 0 22 22" fill="#efeff1" stroke="#444" strokeWidth="1.200">
        <path d="M1 16l4-5h16v5l-4 5H1z" />
        <path d="M6 5l4-4h11v9l-4 5H6z" fill="#94b9e6" stroke="#2e4a75" />
        <path d="M6 5h11l4-4M17 5v10" fill="none" stroke="#2e4a75" />
      </svg>
    )
  return <NodeIcon kind="cube" />
}

function EditFeature() {
  const [pattern, setPattern] = useState("Bodies")

  return (
    <section className="mr-[6px] w-[332px] border-2 border-[#bcbcbd] bg-[#dcdcdc] text-[15px] text-[#4a4a4a]">
      <h2 className="flex h-[31px] items-center border-b-2 border-[#bcbcbd] bg-[#d2d2d3] pr-1 text-[#666]">
        <span className="mr-[9px] h-[14px] w-1 border-x border-[#88888a]" />
        <svg className="mr-[9px] h-3 w-3" viewBox="0 0 12 12" aria-hidden>
          <circle cx="6" cy="6" r="6" fill="#2f2f2f" />
          <path d="M2.500 6h7" stroke="#e8e8e8" strokeWidth="1.800" />
        </svg>
        <span>EDIT FEATURE</span>
        <svg className="ml-auto h-[9px] w-[14px]" viewBox="0 0 14 9" fill="#333" aria-hidden>
          <path d="M0 0v9l7-4.500zM7 0v9l7-4.500z" />
        </svg>
      </h2>
      <div className="h-[235px] pl-3">
        <Field label="Objects" id="objects">
          <Selection id="objects" active />
        </Field>
        <Field label="Axis" id="axis">
          <Selection id="axis" />
        </Field>
        <Field label="Type" id="type">
          <span className="relative flex h-[30px] w-[189px] items-center bg-[#c8c8c9]">
            <span className="pointer-events-none absolute left-[3px]"><FullTypeIcon /></span>
            <select id="type" className="h-full w-full appearance-none pl-[28px] outline-none" defaultValue="Full">
              <option>Full</option>
              <option>Angle</option>
              <option>Symmetric</option>
            </select>
            <span className="pointer-events-none absolute right-1"><Caret className="h-[6px] w-2" /></span>
          </span>
        </Field>
        <Field label="Suppress" id="suppress">
          <span className="relative ml-[3px] h-[18px] w-[18px]">
            <input id="suppress" type="checkbox" defaultChecked className="block h-[18px] w-[18px] appearance-none rounded-[3px] border-2 border-[#5c5c5e] bg-[#d0d0d2]" />
            <Tick />
          </span>
        </Field>
        <Field label="Quantity" id="quantity">
          <input id="quantity" defaultValue="22" className="ml-[3px] h-[22px] w-[171px] bg-white pl-1 outline-none" />
          <span className="ml-[1px] flex h-[22px] w-[14px] flex-col gap-[2px]">
            <button className="flex h-[10px] items-center justify-center bg-[#ececec]" aria-label="Increase">
              <Caret className="h-[5px] w-[6px] rotate-180 text-black" />
            </button>
            <button className="flex h-[10px] items-center justify-center bg-[#ececec]" aria-label="Decrease">
              <Caret className="h-[5px] w-[6px] text-black" />
            </button>
          </span>
        </Field>
        <Field label="Pattern Type">
          <span className="relative flex gap-2">
            {["Faces", "Bodies", "Features", "Components"].map((kind) => (
              <button
                key={kind}
                aria-label={kind}
                onClick={() => setPattern(kind)}
                className={`flex h-[30px] w-[29px] items-center justify-center ${pattern === kind ? "bg-[#5484ad]" : ""}`}
              >
                <PatternIcon kind={kind} />
              </button>
            ))}
            <svg className="absolute -top-[7px] left-4 h-[23px] w-4" viewBox="0 0 14 20" fill="#111" stroke="#fff" strokeWidth="1">
              <path d="M1 1v14.500l3.500-3 3 6.500 2.500-1.200-3-6.300H12z" />
            </svg>
          </span>
        </Field>
      </div>
      <div className="flex h-[46px] items-center justify-end gap-[10px] border-t-2 border-[#bcbcbd] bg-[#d2d2d3] pr-3">
        <button className="h-6 w-[79px] border border-[#c4c4c5] bg-[#ebebeb] leading-5">OK</button>
        <button className="h-6 w-[79px] border border-[#c4c4c5] bg-[#ebebeb] leading-5">Cancel</button>
      </div>
    </section>
  )
}

function NavButton({ label, caret, children }: { label: string; caret?: boolean; children: ReactNode }) {
  return (
    <button aria-label={label} className="flex items-center gap-[3px]">
      <svg className="h-[22px] w-[22px]" viewBox="0 0 22 22" fill="none" stroke="#3f4247" strokeWidth="1.400">
        {children}
      </svg>
      {caret && <Caret className="h-[6px] w-2" />}
    </button>
  )
}

function NavBar() {
  return (
    <div className="flex gap-[9px]">
      <div className="flex h-8 w-[184px] items-center justify-between bg-[#cccccd] pr-[11px] pl-1">
        <NavButton label="Orbit" caret>
          <path d="M10 21V6H8l3-5 3 5h-2v15z" fill="#f0f0f0" />
          <path d="M9 8Q1 9 1 12t8 3M13 8q8 1 8 4t-8 3" />
          <path d="M9 12l-5 3 5 4z" fill="#222" stroke="#222" />
        </NavButton>
        <NavButton label="Look at">
          <path d="M1 9h20v12H1z" fill="#f0f0f0" />
          <path d="M6 13h10v5H6z" fill="#c4c4c8" />
          <path d="M2 7l6-5v3l6-1 3-3-1 6" strokeWidth="1" />
        </NavButton>
        <NavButton label="Pan">
          <path d="M7 20L2 12q0-2 2-1l3 2-3-8q1-2 2.500 0L9 10 8.500 2q1.500-2 2.500 0l1 8 2-7q2-1 2 1l-1 7 3-5q2 0 1.500 2L16 17l-1 4z" fill="#f5f5f5" />
        </NavButton>
        <NavButton label="Zoom">
          <circle cx="8" cy="9" r="6.500" fill="#f2f2f4" />
          <path d="M12.500 14l5.500 6" strokeWidth="3.500" />
          <path d="M15 4h6M18 1v6M16 9h5" />
        </NavButton>
        <NavButton label="Fit">
          <circle cx="9.500" cy="9" r="8" fill="#f2f2f4" />
          <path d="M6 5.500h7v7H6z" fill="#d5d5d8" />
          <path d="M15 15l5.500 6" strokeWidth="3.500" />
        </NavButton>
      </div>
      <div className="flex h-8 w-[125px] items-center justify-between bg-[#cccccd] px-[5px]">
        <NavButton label="Display settings" caret>
          <path d="M1 1h20v15H1z" fill="#eee" />
          <path d="M4 4h14v9H4z" fill="#a5c5ee" stroke="#49658f" />
          <path d="M8 16v4H6v1h10v-1h-2v-4" fill="#eee" />
        </NavButton>
        <NavButton label="Grid and snaps" caret>
          <path d="M1 1h20v20H1z" fill="#f2f2f2" />
          <path d="M5 1v20M9 1v20M13 1v20M17 1v20M1 5h20M1 9h20M1 13h20M1 17h20" stroke="#77797d" strokeWidth="1" />
        </NavButton>
        <NavButton label="Viewports" caret>
          <path d="M1 2h20v17H1z" fill="#cfdcef" stroke="#2f4a7a" strokeWidth="1.200" />
          <path d="M3 4.500h7v5H3zM12.500 4.500h6.500v5h-6.500zM3 12h7v5H3zM12.500 12h6.500v5h-6.500z" fill="#a3c0ea" stroke="#3f629c" strokeWidth="1" />
        </NavButton>
      </div>
    </div>
  )
}

const playback = [
  { label: "Go to start", d: "M1 1h3v18H1zM16 1v18L5 10z" },
  { label: "Step back", d: "M12 2v16L0 10zM13.500 6h3v8h-3z" },
  { label: "Step forward", d: "M4 2v16l12-8zM0 6h3v8H0z" },
  { label: "Play", d: "M1 0v20l15-10z" },
  { label: "Go to end", d: "M0 1v18l11-9zM13 1h3v18h-3z" },
]

const features = ["sketch", "revolve", "plane", "split", "sketch", "extrude", "shell", "plane", "split", "sketch", "extrude", "pattern", "ghost"]

function FeatureIcon({ kind }: { kind: string }) {
  return (
    <svg className={`h-[22px] w-[22px] ${kind === "ghost" ? "opacity-25" : ""}`} viewBox="0 0 22 22" fill="none" stroke="#3c4250" strokeWidth="1.400">
      {kind === "sketch" && (
        <>
          <path d="M1 2h20v19H1z" fill="#f0f4fa" stroke="#1c1c1c" strokeWidth="2" />
          <path d="M5 7v10h11" />
          <path d="M9 14l2-5 8-8 3 3-8 8z" fill="#f2cc3c" stroke="#9c7812" strokeWidth="1" />
        </>
      )}
      {kind === "revolve" && (
        <>
          <path d="M2 4q9-6 18 1M2 4V0M2 4h4" />
          <path d="M1 11q10-6 20 0l-2 9q-8-4-16 0z" fill="#a9c6ec" />
          <path d="M5 13q6-2 12 0" stroke="#f4f8fd" />
        </>
      )}
      {kind === "plane" && (
        <>
          <path d="M1 8l5-7h5v14l-5 6H1z" fill="#f0f0f2" />
          <path d="M6 8l5-7v14l-5 6z" fill="#6caa5f" stroke="#2f5a28" />
          <path d="M15 7l6-6v14l-6 6z" fill="#f0a070" stroke="#94502b" />
        </>
      )}
      {kind === "split" && (
        <>
          <path d="M1 7l6-6h14v14l-5 6H1z" fill="#e9ebef" />
          <path d="M1 7l6-6h14v11l-6 2-6-2-8 3z" fill="#9fc0ea" />
          <path d="M0 15l8-3 7 3 7-4" stroke="#cf3b30" strokeWidth="1.800" />
        </>
      )}
      {kind === "extrude" && (
        <>
          <path d="M2 6l4-5h8v14l-4 6H2z" fill="#9fc0ea" stroke="#3a5888" />
          <path d="M1 17h10v4H1z" fill="#eee" stroke="#888" />
          <path d="M18.500 21V3M16 5l2.500-4L21 5" strokeWidth="1.800" />
        </>
      )}
      {kind === "shell" && (
        <>
          <path d="M1 7l6-6h14v14l-5 6H1z" fill="#f0f0f2" />
          <path d="M4 10h10v9H4z" fill="#9fc0ea" stroke="#2f4a7a" />
          <path d="M8 10v5h6" stroke="#2f4a7a" />
        </>
      )}
      {(kind === "pattern" || kind === "ghost") && (
        <>
          <circle cx="11" cy="11" r="7" stroke="#5a6a86" />
          <path d="M9 1h5v5H9zM1 9h5v5H1zM16 9h5v5h-5zM9 16h5v5H9z" fill="#c5d8f2" stroke="#3a4c6e" />
        </>
      )}
    </svg>
  )
}

function Timeline() {
  return (
    <footer className="flex h-[67px] items-start bg-[#cdcdce] pr-[6px] pl-[14px]">
      <div className="flex gap-[18px] pt-[18px]">
        {playback.map(({ label, d }) => (
          <button key={label} aria-label={label}>
            <svg className="h-5 w-4" viewBox="0 0 16 20" fill="#4c4c50">
              <path d={d} />
            </svg>
          </button>
        ))}
      </div>
      <div className="relative ml-[23px] pt-[18px]">
        <ol className="flex">
          {features.map((kind, i) => (
            <li key={i} className="relative flex w-8 flex-col items-center">
              {kind === "revolve" && (
                <svg className="absolute -top-[11px] h-[7px] w-[22px]" viewBox="0 0 22 7" fill="#444">
                  <path d="M0 7l4-7h4L4 7zM7 7l4-7h4l-4 7zM14 7l4-7h4l-4 7z" />
                </svg>
              )}
              <button aria-label={kind}>
                <FeatureIcon kind={kind} />
              </button>
            </li>
          ))}
        </ol>
        <svg className="h-2 w-[416px]" viewBox="0 0 416 8" fill="none" stroke="#6a6a6c" strokeWidth="2">
          <path d="M16 0v7h385V0M48 1v6M80 1v6M112 1v6M144 1v6M176 1v6M208 1v6M240 1v6M272 1v6M304 1v6M336 1v6M368 1v6" />
        </svg>
        <svg className="absolute top-[10px] right-[-8px] h-[44px] w-4" viewBox="0 0 16 44" fill="#606063">
          <path d="M0 0h16v7l-6 6v31H7V13L0 7z" />
        </svg>
      </div>
      <button className="mt-[17px] ml-auto" aria-label="Timeline settings">
        <svg className="h-[22px] w-[22px]" viewBox="0 0 22 22" fill="none" stroke="#4c4c50">
          <circle cx="11" cy="11" r="8.500" strokeWidth="3" strokeDasharray="3.600 3.080" />
          <circle cx="11" cy="11" r="6" strokeWidth="3" />
          <circle cx="11" cy="11" r="1.500" fill="#4c4c50" />
        </svg>
      </button>
    </footer>
  )
}

export default function App() {
  return (
    <div className="flex min-h-screen flex-col bg-[#ededee] font-['Noto_Sans','Open_Sans',sans-serif]">
      <TopBar />
      <TabBar />
      <main className="relative flex flex-1 flex-col">
        <Canvas />
        <div className="relative flex items-start justify-between pt-[5px] pl-[6px]">
          <div>
            <Toolbar />
            <Browser />
          </div>
          <div className="flex flex-col items-end gap-[105px] pt-5">
            <ViewCube />
            <EditFeature />
          </div>
        </div>
        <div className="relative mt-auto grid grid-cols-[1fr_auto_1fr] items-center pb-[5px] pl-[6px]">
          <PanelHead title="COMMENTS" open={false} />
          <div className="-ml-[6px]">
            <NavBar />
          </div>
        </div>
      </main>
      <Timeline />
    </div>
  )
}
